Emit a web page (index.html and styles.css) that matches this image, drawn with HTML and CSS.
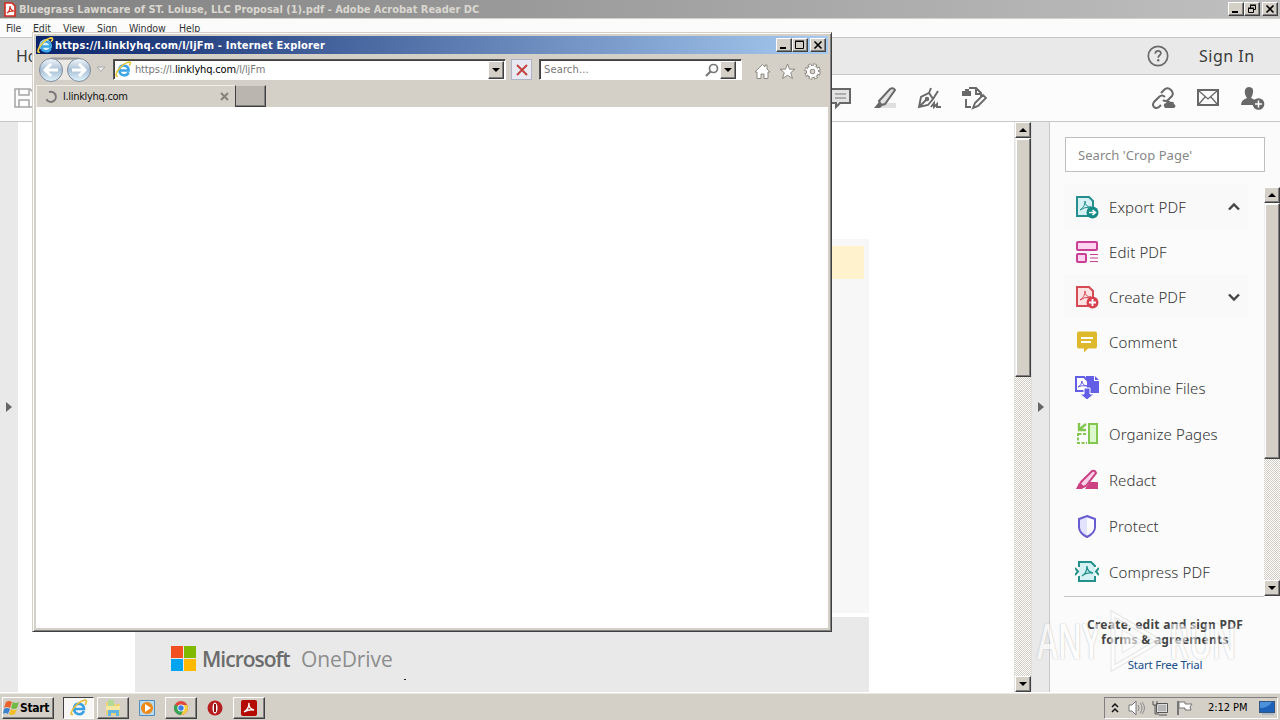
FILE: index.html
```html
<!DOCTYPE html>
<html lang="en">
<head>
<meta charset="UTF-8">
<title>Bluegrass Lawncare of ST. Loiuse, LLC Proposal (1).pdf - Adobe Acrobat Reader DC</title>
<link rel="stylesheet" href="styles.css">
</head>
<body>
<div class="desktop">

<!-- Acrobat Reader -->
<div class="titlebar">
	<svg class="pdf-ico" width="12" height="15" viewBox="0 0 12 15"><path d="M1 1h7l3 3v10H1z" fill="#fff" stroke="#d22b20" stroke-width="1.6"/><path d="M3 11c2-1 3-4 3-7c0 3 2 5 4 5c-3 0-5 0-7 2" fill="none" stroke="#d22b20" stroke-width="1.2"/></svg>
	<span class="title-text">Bluegrass Lawncare of ST. Loiuse, LLC Proposal (1).pdf - Adobe Acrobat Reader DC</span>
	<div class="win-btns">
		<i class="wbtn"><svg width="14" height="12"><path d="M3 9h6" stroke="#000" stroke-width="2"/></svg></i>
		<i class="wbtn"><svg width="14" height="12"><path d="M5.5 5V2.5h5v4H9M5 2h6M3.500 5.500h5v4h-5zM3 5h6" fill="none" stroke="#000"/></svg></i>
		<i class="wbtn close"><svg width="14" height="12"><path d="M3.500 2.500l7 7M10.500 2.500l-7 7" stroke="#000" stroke-width="1.600"/></svg></i>
	</div>
</div>
<div class="menubar">
	<span class="m1">File</span><span class="m2">Edit</span><span class="m3">View</span><span class="m4">Sign</span><span class="m5">Window</span><span class="m6">Help</span>
</div>
<div class="tabbar">
	<span class="home">Home</span>
	<svg class="help" width="22" height="22" viewBox="0 0 22 22"><circle cx="11" cy="11" r="9.700" fill="none" stroke="#6a6a6a" stroke-width="1.700"/><path d="M8.300 8.700c0-3.700 5.600-3.500 5.600-.4c0 2-2.700 2-2.700 4.500" fill="none" stroke="#6a6a6a" stroke-width="1.700"/><circle cx="11.200" cy="15.300" r="1.200" fill="#6a6a6a"/></svg>
	<span class="signin">Sign In</span>
</div>
<div class="toolbar">
	<svg class="save" width="20" height="20" viewBox="0 0 20 20" fill="none" stroke="#a4a4a4" stroke-width="1.500"><path d="M1 1h15l3 3v15H1zM5 1v6h10V1M5 19v-7h10v7"/></svg>
	<div class="tools-mid">
		<svg width="24" height="24" viewBox="0 0 24 24"><path d="M2 3h19v14H11l-4 4v-4H2z" fill="#e3e3e3" stroke="#686868" stroke-width="2"/><path d="M6 8h11M6 12h11" stroke="#777" stroke-width="1.200"/></svg>
		<svg width="24" height="24" viewBox="0 0 24 24"><path d="M9 17h14v5H6z" fill="#dfdfdf"/><path d="M6 15L17 3q3-2 5 1L12 18l-4 1z" fill="#e3e3e3" stroke="#686868" stroke-width="2"/><path d="M6 16l4 3-3 3H1z" fill="#686868"/></svg>
		<svg width="24" height="24" viewBox="0 0 24 24" fill="none" stroke="#686868" stroke-width="1.900"><path d="M2 21L4 11l8-4 4 6-5 6zM2 21l7-7M12 7l2-5M16 13l5-8"/><circle cx="10" cy="13" r="1.300"/><path d="M14 21l3-4v4l3-3v3h4"/></svg>
		<svg width="26" height="24" viewBox="0 0 26 24" fill="none" stroke="#686868" stroke-width="1.900"><path d="M8 2h7l5 5v4M15 2v6h5M5 13v8h5M12 22l2-5 8-8 3 3-8 8z"/><path d="M1 5h9v5H1zM4 3h4v2H4z" fill="#686868" stroke="none"/></svg>
	</div>
	<div class="tools-right">
		<svg width="25" height="24" viewBox="0 0 25 24" fill="none" stroke="#686868" stroke-width="2"><path d="M10 7l4-4q3-2 6 1t1 6l-4 4q-3 2-5 0M14 11q-3-3-6 0l-5 5q-2 3 0 5t5 0l2-2"/><path d="M14 22q-3-4 1-5q1-4 5-1q3-1 3 2q3 2 0 4z" fill="#686868" stroke="none"/></svg>
		<svg width="24" height="24" viewBox="0 0 24 24" fill="none" stroke="#686868"><rect x="2" y="4" width="20" height="15" stroke-width="2"/><path d="M3 5l9 8 9-8M3 18l6-7M21 18l-6-7" stroke-width="1.300"/></svg>
		<svg width="26" height="24" viewBox="0 0 26 24" fill="#686868"><path d="M9 1q5 0 4 6q-1 4-2 5l4 2-2 5H1q0-5 6-7q-3-4-2-8q1-3 4-3z"/><circle cx="18.500" cy="18" r="5.200" stroke="#686868" stroke-width="1.300"/><path d="M15 18h7M18.500 14.500v7" stroke="#fff" stroke-width="1.500"/></svg>
	</div>
</div>

<div class="main">
	<div class="strip left"><i class="tri"></i></div>
	<div class="doc">
		<div class="sheet">
			<div class="yellow"></div>
		</div>
		<div class="sheet-foot">
			<div class="ms-logo"><i></i><i></i><i></i><i></i></div>
			<span class="ms">Microsoft</span><span class="od">OneDrive</span>
			<b class="dot"></b>
		</div>
	</div>
	<div class="scroll doc-scroll">
		<i class="sbtn up"></i><i class="thumb"></i><i class="track"></i><i class="sbtn down"></i>
	</div>
	<div class="strip right"><i class="tri"></i></div>
	<div class="panel">
		<div class="search">Search 'Crop Page'</div>
		<div class="panel-body">
			<ul class="tool-list">
				<li class="shade"><svg width="24" height="24" viewBox="0 0 24 24"><path d="M2 2h12l4 4v15H2z" fill="#d5f1f3" stroke="#268e8e" stroke-width="2"/><path d="M5 15q5-3 5-9q0 6 6 6q-7 0-11 3" fill="none" stroke="#268e8e"/><circle cx="17.500" cy="17.500" r="6" fill="#158b88"/><path d="M14 17.500h6M17.500 15l3 2.500-3 2.500" stroke="#fff" stroke-width="1.600" fill="none"/></svg><span>Export PDF</span><svg class="chev" width="14" height="10"><path d="M2 7.500L7 2.500l5 5" fill="none" stroke="#444" stroke-width="2.400"/></svg></li>
				<li><svg width="24" height="24" viewBox="0 0 24 24" fill="#ffd3ef" stroke="#c93f95" stroke-width="2"><rect x="2" y="2" width="20" height="8" rx="1"/><rect x="2" y="14" width="9" height="8" rx="1"/><path d="M15 14.500h8M15 18h8M15 21.500h8" stroke-width="1.100"/></svg><span>Edit PDF</span></li>
				<li class="shade"><svg width="24" height="24" viewBox="0 0 24 24"><path d="M2 2h12l4 4v15H2z" fill="#fde3e3" stroke="#d64a55" stroke-width="2"/><path d="M5 15q5-3 5-9q0 6 6 6q-7 0-11 3" fill="none" stroke="#d64a55"/><circle cx="17.500" cy="17.500" r="6" fill="#d84250"/><path d="M14 17.500h7M17.500 14v7" stroke="#fff" stroke-width="1.800"/></svg><span>Create PDF</span><svg class="chev" width="14" height="10"><path d="M2 2.500l5 5 5-5" fill="none" stroke="#444" stroke-width="2.400"/></svg></li>
				<li><svg width="24" height="24" viewBox="0 0 24 24"><path d="M4 1.500h16q2 0 2 2v13q0 2-2 2h-7l-4 4v-4H4q-2 0-2-2v-13q0-2 2-2z" fill="#dfb92c"/><path d="M6 8h12M6 12h10" stroke="#fff" stroke-width="2"/></svg><span>Comment</span></li>
				<li class="big"><svg width="26" height="26" viewBox="0 0 26 26"><path d="M14 1h6v5h5v12H12V1z" fill="#635ee6"/><path d="M21 1l4 4h-4z" fill="#635ee6"/><path d="M2 2h8l4 4v10H2z" fill="#fff" stroke="#635ee6" stroke-width="2"/><path d="M4 12q4-2 4-6q0 4 5 5q-6-1-9 1" fill="none" stroke="#635ee6"/><path d="M10 13h6v6h4l-7 6-7-6h4z" fill="#635ee6" stroke="#fff"/></svg><span>Combine Files</span></li>
				<li class="big"><svg width="24" height="24" viewBox="0 0 24 24" fill="none" stroke="#83c750" stroke-width="2"><rect x="14" y="2" width="8" height="19" fill="#dcf8cc"/><path d="M3 11v10h9M11 12H2" stroke-dasharray="3 1.500"/><path d="M11 2L5 7M4 1v7h7" stroke-width="2.400"/></svg><span>Organize Pages</span></li>
				<li class="big"><svg width="24" height="24" viewBox="0 0 24 24"><path d="M15 14h7q1 0 1 1v6H10z" fill="#cc3f83"/><path d="M6 14L17 3q3-1 4 2L11 18l-3 1-3-3z" fill="#fcd1e7" stroke="#cc3f83" stroke-width="2"/><path d="M4 15l5 4-2 2H1z" fill="#cc3f83"/></svg><span>Redact</span></li>
				<li class="big"><svg width="24" height="24" viewBox="0 0 24 24"><path d="M12 2l8 3v8q0 6-8 10q-8-4-8-10V5z" fill="#e4e3ff" stroke="#675bd0" stroke-width="2"/><path d="M12 4l7 2v7q0 5-7 8z" fill="#fafaff"/></svg><span>Protect</span></li>
				<li class="big"><svg width="24" height="24" viewBox="0 0 24 24" fill="none" stroke="#23908c" stroke-width="2"><path d="M4 3h12l4 4v13H4z" fill="#d5f1f3" stroke="none"/><path d="M4 7V2h12l4 4v1M4 16v5h16v-5M0 8l3 3.500L0 15M24 8l-3 3.500 3 3.500"/><path d="M7 16q5-3 5-10q0 6 6 7q-7-1-11 3" stroke-width="1.300"/></svg><span>Compress PDF</span></li>
			</ul>
			<div class="scroll panel-scroll">
				<i class="sbtn up"></i><i class="thumb"></i><i class="track"></i><i class="sbtn down"></i>
			</div>
		</div>
		<div class="promo">
			<b class="p1">Create, edit and sign PDF</b>
			<b class="p2">forms &amp; agreements</b>
			<a class="trial">Start Free Trial</a>
		</div>
	</div>
</div>

<!-- taskbar -->
<div class="taskbar">
	<div class="start"><svg width="17" height="16" viewBox="0 0 17 16"><path d="M3 2q3-2 6 0L7 8Q4 6 1 8z" fill="#e9622a"/><path d="M10 2q3 2 6 0l-2 6q-3 2-6 0z" fill="#72b844"/><path d="M1 9q3-2 6 0l-2 5q-3-2-5 0z" fill="#3c83cf"/><path d="M8 9q3 2 6 0l-2 5q-3 2-6 0z" fill="#f4bd2c"/></svg><b>Start</b></div>
	<div class="task active"><svg width="18" height="18" viewBox="0 0 18 18"><path d="M14 12q-2 4-6 3t-4-6q1-5 6-4q4 1 4 5H5" fill="none" stroke="#39a0e3" stroke-width="2.600"/><path d="M3 15q-4 2 0-5Q9 2 15 1q3 0 0 5" fill="none" stroke="#e8bd35" stroke-width="1.500"/></svg></div>
	<div class="task folder"><svg width="18" height="18" viewBox="0 0 18 18"><path d="M2 3h6l1 2h7v11H2z" fill="#e9d47c"/><path d="M4 1h6v6H4z" fill="#b2d996"/><path d="M2 7h14v4H2z" fill="#f6e8a2"/><path d="M4 17v-6h11v6h-3v-3H7v3z" fill="#62b4df"/></svg></div>
	<div class="task-plain wmp"><svg width="16" height="16" viewBox="0 0 16 16"><path d="M.5.500h15v15H.5z" fill="#b9d9ef" stroke="#538dbd"/><circle cx="8" cy="8" r="6" fill="#ee8817"/><path d="M6 4l6 4-6 4z" fill="#fff"/></svg></div>
	<div class="task chrome"><svg width="16" height="16" viewBox="0 0 16 16"><circle cx="8" cy="8" r="7" fill="#e0493d"/><path d="M1.900 4.500A7 7 0 0 0 8 15l3-5.500-3-1.500z" fill="#36a455"/><path d="M8 15a7 7 0 0 0 6.300-10H8l3 4z" fill="#f6cd40"/><circle cx="8" cy="8" r="3.600" fill="#fff"/><circle cx="8" cy="8" r="2.700" fill="#3d7ce5"/></svg></div>
	<div class="task-plain opera"><svg width="16" height="16" viewBox="0 0 16 16"><circle cx="8" cy="8" r="7.500" fill="#b81e20"/><ellipse cx="8" cy="8" rx="2.500" ry="5.500" fill="#fff"/><path d="M8 4v8" stroke="#8c1114" stroke-width="2"/></svg></div>
	<div class="task acro"><svg width="16" height="16" viewBox="0 0 16 16"><rect width="16" height="16" rx="2" fill="#b30b00"/><path d="M3 12q5-3 5-9q-1 5 5 7q-5-1-10 2" fill="none" stroke="#fff" stroke-width="1.400"/></svg></div>
	<div class="tray">
		<svg width="8" height="12"><path d="M1 5l3-3 3 3M1 10l3-3 3 3" fill="none" stroke="#111" stroke-width="1.500"/></svg>
		<svg class="spk" width="18" height="16" viewBox="0 0 18 16" fill="none" stroke="#8a8a8a"><path d="M1 5h3l4-4v14l-4-4H1z" fill="#fff" stroke="#777"/><path d="M10 5q2 3 0 6M12 3q4 5 0 10M14 2q5 6 0 12"/></svg>
		<svg class="net" width="17" height="16" viewBox="0 0 17 16"><path d="M5 4h10v8H5z" fill="#b5b5b5" stroke="#fff"/><path d="M4.500 3.500h11v9h-11zM7 15h8M1 1v4h4V1M3 5v9h4" fill="none" stroke="#555"/></svg>
		<svg class="flag" width="17" height="16" viewBox="0 0 17 16"><path d="M2 1v14" stroke="#777" stroke-width="2"/><path d="M3 2h6v2h7l-2 3 1 3H9V8H3z" fill="#fff" stroke="#777"/></svg>
		<span class="clock">2:12 PM</span>
		<svg class="desk" width="16" height="14"><rect x=".5" y=".5" width="15" height="11" fill="#1e61b8" stroke="#34567f"/><path d="M1 7q8 0 12-6H1z" fill="#4b91dc"/><path d="M3 13h12" stroke="#89a5c4"/></svg>
	</div>
</div>

<!-- Internet Explorer window -->
<div class="ie">
	<div class="ie-title">
		<svg width="17" height="17" viewBox="0 0 18 18"><circle cx="9" cy="9" r="6.500" fill="#dff2fc"/><path d="M14.500 12q-2 4-6 3t-4-6q1-5 6-4q4 1 4 5H5" fill="none" stroke="#3aa4e8" stroke-width="2.600"/><path d="M3 16q-4 1 0-6Q9 2 15 1q3 0 0 4" fill="none" stroke="#f4d23e" stroke-width="1.800"/></svg>
		<b>https://l.linklyhq.com/l/ljFm - Internet Explorer</b>
		<div class="win-btns">
			<i class="wbtn"><svg width="14" height="12"><path d="M3 9h6" stroke="#000" stroke-width="2"/></svg></i>
			<i class="wbtn"><svg width="14" height="12"><path d="M2.500 2.500h8v7h-8zM2 2h9" fill="none" stroke="#000"/></svg></i>
			<i class="wbtn close"><svg width="14" height="12"><path d="M3.500 2.500l7 7M10.500 2.500l-7 7" stroke="#000" stroke-width="1.600"/></svg></i>
		</div>
	</div>
	<div class="ie-nav">
		<svg class="navs" width="55" height="26" viewBox="0 0 55 26"><defs><linearGradient id="ball" x1="0" y1="0" x2="0" y2="1"><stop offset="0" stop-color="#f3f8fc"/><stop offset=".5" stop-color="#a9c0d5"/><stop offset="1" stop-color="#e2f5fe"/></linearGradient></defs><path d="M13 1.500h28" stroke="#999" stroke-width="2"/><path d="M13 3h28v20H13z" fill="#ece9e5"/><circle cx="13" cy="13" r="11.500" fill="url(#ball)" stroke="#7f8b9b"/><circle cx="41" cy="13" r="11.500" fill="url(#ball)" stroke="#7f8b9b"/><path d="M20 13H8M13 7l-6 6 6 6M34 13h12M41 7l6 6-6 6" stroke="#fff" stroke-width="3" fill="none"/></svg>
		<svg class="drop" width="10" height="7"><path d="M1 1h8L5 5.500z" fill="#eee" stroke="#aaa"/></svg>
		<div class="addr"><svg width="17" height="17" viewBox="0 0 18 18"><path d="M14.500 12q-2 4-6 3t-4-6q1-5 6-4q4 1 4 5H5" fill="none" stroke="#3aa4e8" stroke-width="2.600"/><path d="M3 16q-4 1 0-6Q9 2 15 1q3 0 0 4" fill="none" stroke="#e9c53a" stroke-width="1.600"/></svg><span class="url">https://l.<em>linklyhq.com</em>/l/ljFm</span><i class="sbtn down"></i></div>
		<div class="stop"><svg width="12" height="12"><path d="M1 1l10 10M11 1L1 11" stroke="#c34343" stroke-width="2"/></svg></div>
		<div class="ie-search"><span>Search...</span><svg width="14" height="14" viewBox="0 0 14 14" fill="none" stroke="#777"><circle cx="8.500" cy="5.500" r="4" stroke-width="1.700"/><path d="M5.500 8.500L1 13" stroke-width="2.200"/></svg><i class="sbtn down"></i></div>
		<div class="ie-icons">
			<svg width="17" height="17" viewBox="0 0 17 17"><path d="M8.500 1.500L1 9h2v6.500h4V11h3v4.500h4V9h2L13 6V2h-2v2z" fill="#fff" stroke="#8f8a82"/></svg>
			<svg width="17" height="17" viewBox="0 0 17 17"><path d="M8.500 1l2 5.200H16l-4.300 3.500 1.800 5.800-5-3.300-5 3.300 1.800-5.800L1 6.200h5.500z" fill="#fff" stroke="#8f8a82"/></svg>
			<svg width="17" height="17" viewBox="0 0 17 17" fill="none"><circle cx="8.500" cy="8.500" r="6.500" stroke="#85807a" stroke-width="3.400" stroke-dasharray="3.300 1.800"/><circle cx="8.500" cy="8.500" r="4.300" stroke="#85807a" stroke-width="4.600"/><circle cx="8.500" cy="8.500" r="6.500" stroke="#fff" stroke-width="1.800" stroke-dasharray="2 3.100" stroke-dashoffset="-.6"/><circle cx="8.500" cy="8.500" r="4.200" stroke="#fff" stroke-width="3"/></svg>
		</div>
	</div>
	<div class="ie-tabs">
		<div class="tab"><svg width="14" height="14"><path d="M5 2.200a5 5 0 1 1-2.500 7" fill="none" stroke="#777" stroke-width="2"/></svg><span>l.linklyhq.com</span><svg class="x" width="9" height="9"><path d="M1 1l7 7M8 1L1 8" stroke="#85807a" stroke-width="2"/></svg></div>
		<i class="newtab"></i>
	</div>
	<div class="ie-page"></div>
</div>

<div class="wmark"><span>ANY</span><svg width="60" height="62" viewBox="0 0 60 62" fill="none"><path d="M8 4l46 27L8 58z" stroke="#d9d9d9" stroke-width="5"/><path d="M8 4l46 27L8 58z" stroke="#fff" stroke-width="3"/><path d="M17 20l20 11-20 12z" fill="#fff" stroke="#d9d9d9"/></svg><span>RUN</span></div>
</div>
</body>
</html>
```
FILE: styles.css
```css
*{box-sizing:border-box}
body{margin:0;background:#fff;font-family:"DejaVu Sans Condensed","DejaVu Sans",sans-serif;font-size:11px;color:#222}
i,em{font-style:normal}
svg{display:block;flex:none}
span,b,a{white-space:nowrap}
.desktop{position:relative;width:1280px;height:720px;overflow:hidden;display:flex;flex-direction:column}

/* acrobat */
.titlebar{height:19px;display:flex;align-items:center;background:linear-gradient(90deg,#808080,#c0c0c0);border-bottom:1px solid #d4d0c8;padding:0 2px 0 4px}
.title-text{font-weight:bold;color:#dad7d0;margin-left:3px;letter-spacing:-.02px}
.win-btns{display:flex;margin-left:auto}
.wbtn{width:16px;height:14px;background:#d4d0c8;border:1px solid;border-color:#fff #404040 #404040 #fff;box-shadow:inset -1px -1px #808080}
.close{margin-left:2px}
.menubar{height:19px;background:#fbfbfb;border-bottom:1px solid #c6c6c6;display:flex;padding:3px 0 0 6px;line-height:13px;color:#333}
.menubar span{font-size:10.5px;letter-spacing:-.1px}
.m1{width:27px}.m2{width:30px}.m3{width:34px}.m4{width:32px}.m5{width:50px}
.tabbar{height:37px;background:#e9e9e9;border-bottom:1px solid #c8c8c8;display:flex;align-items:center;padding:0 26px 0 16px;font-family:"Noto Sans",sans-serif;font-size:16px;color:#3b3b3b}
.help{margin-left:auto}
.signin{margin-left:30px;width:55px;letter-spacing:.5px}
.toolbar{height:47px;background:#fcfcfc;border-bottom:1px solid #c8c8c8;display:flex;align-items:center;padding:0 14px}
.tools-mid{display:flex;gap:20px;margin-left:795px}
.tools-right{display:flex;gap:20px;margin-left:auto}
.main{height:570px;display:flex}
.strip{width:18px;background:#e9e9e9;display:flex;align-items:center;justify-content:center}
.strip.right{border-right:1px solid #c8c8c8}
.tri{border-left:6px solid #666;border-top:5px solid transparent;border-bottom:5px solid transparent}
.doc{width:996px;background:#fff;padding:117px 0 0 117px}
.sheet{width:734px;height:374px;background:#f7f7f7;padding:7px 5px 0 0}
.yellow{height:33px;background:#fff2cc}
.sheet-foot{width:734px;height:75px;margin-top:4px;background:#e9e9e9;display:flex;padding:29px 0 0 36px;font-family:"Open Sans","Noto Sans",sans-serif;font-size:21px;line-height:26px}
.ms-logo{display:grid;grid-template-columns:12px 12px;grid-template-rows:12px 12px;gap:1px;width:25px;height:26px}
.ms-logo i:nth-child(1){background:#f25022}
.ms-logo i:nth-child(2){background:#7fba00}
.ms-logo i:nth-child(3){background:#00a4ef}
.ms-logo i:nth-child(4){background:#ffb900}
.ms{margin-left:6px;width:99px;color:#6c6c6c;font-weight:600;letter-spacing:-1px}
.od{width:92px;color:#8d8d8d;letter-spacing:-.1px}
.dot{width:2px;height:1px;background:#222;margin:33px 0 0 11px}

/* classic scrollbars */
.scroll{width:17px;display:flex;flex-direction:column}
.sbtn{width:16px;height:16px;flex:none;background:#d4d0c8;border:1px solid;border-color:#fff #404040 #404040 #fff;box-shadow:inset -1px -1px #808080;display:flex;align-items:center;justify-content:center}
.sbtn:before{content:"";border-left:4px solid transparent;border-right:4px solid transparent}
.up:before{border-bottom:4px solid #000}
.down:before{border-top:4px solid #000}
.thumb{background:#d4d0c8;border:1px solid;border-color:#fff #404040 #404040 #eee;box-shadow:inset -1px -1px #808080,inset 1px 1px #fff}
.track{flex:1;background:repeating-conic-gradient(#d0ccc3 0 25%,#fff 0 50%) 0 0/2px 2px}
.scroll .sbtn{width:100%}
.doc-scroll .thumb{height:239px}
.doc-scroll{width:18px;border-left:1px solid #e4e2dd;border-right:1px solid #ddd}
.panel-scroll{width:16px;height:409px;margin-top:2px}
.panel-scroll .thumb{height:256px}

.panel{width:230px;background:#fbfbfb}
.search{width:200px;height:35px;margin:15px 0 0 15px;border:1px solid #bfbfbf;background:#fff;color:#888;font:13px/34px "Noto Sans",sans-serif;padding-left:12px;letter-spacing:.05px}
.panel-body{display:flex;justify-content:space-between;margin-top:13px;padding-left:14px}
.tool-list{list-style:none;margin:-1px 0 0;padding:0;width:200px;height:413px;border-bottom:1px solid #c4c4c4;font-family:"Noto Sans",sans-serif;font-size:15px;font-weight:300;color:#333;letter-spacing:.12px}
.tool-list li{height:45px;width:184px;display:flex;align-items:center;padding-left:11px}
.tool-list li.big{height:46px}
.tool-list li:nth-child(4){height:46px}
.tool-list li.shade{background:#f9f9f9}
.tool-list li>span{margin-left:10px}
.tool-list svg[width="26"]{margin:0 -1px}
.chev{margin-left:auto;margin-right:7px}
.promo{display:flex;flex-direction:column;align-items:center;padding-top:20px;line-height:15px;font-size:12px}
.p1,.p2{font-family:"Noto Sans",sans-serif;font-size:12px;color:#444;letter-spacing:.27px}
.trial{font-family:"Noto Sans",sans-serif;font-size:11.5px;color:#1a4f8c;margin-top:10px;letter-spacing:-.23px}

/* taskbar */
.taskbar{height:28px;background:#d4d0c8;border-top:1px solid #fff;box-shadow:inset 0 1px #ece9e2;display:flex;align-items:center;padding:2px 2px 0 2px}
.start,.task{height:22px;border:1px solid;border-color:#fff #404040 #404040 #fff;box-shadow:inset -1px -1px #808080;display:flex;align-items:center;justify-content:center}
.start{width:52px;font-size:12px;color:#000;justify-content:flex-start}
.start b{letter-spacing:-.3px}
.task{width:32px}
.active{width:31px;margin-left:9px;background:#f8f7f5;border-color:#404040 #fff #fff #404040;box-shadow:none}
.folder{margin-left:3px}
.task-plain{width:16px}
.wmp,.chrome,.opera,.acro{margin-left:10px}
.tray{margin-left:auto;width:174px;height:22px;border:1px solid;border-color:#808080 #fff #fff #808080;display:flex;align-items:center;padding-left:6px}
.spk{margin-left:9px}
.net{margin-left:6px}
.flag{margin-left:7px}
.clock{margin-left:15px;width:51px;color:#000;letter-spacing:-.05px}

/* ie window */
.ie{position:absolute;left:32px;top:32px;width:800px;height:600px;background:#d4d0c8;border:1px solid;border-color:#d4d0c8 #404040 #404040 #d4d0c8;box-shadow:inset 1px 1px #fff,inset -1px -1px #808080;padding:3px;display:flex;flex-direction:column}
.ie-title{height:18px;background:linear-gradient(90deg,#0a246a,#a6caf0);display:flex;align-items:center;padding:0 2px 0 1px;color:#fff}
.ie-title b{margin-left:1px;letter-spacing:.2px}
.ie-nav{height:31px;display:flex;align-items:center;padding-left:2px}
.drop{margin-left:3px}
.addr,.ie-search{height:21px;background:#fff;border:1px solid;border-color:#555 #fff #fff #555;box-shadow:inset 1px 1px #404040;display:flex;align-items:center;padding:1px}
.addr{margin-left:7px;width:393px}
.url{color:#777;margin-left:3px;letter-spacing:-.15px}
.url em{color:#000}
.addr .sbtn{margin-left:auto;height:18px}
.stop{width:21px;height:21px;margin-left:5px;border:1px solid #aeb4c5;background:#e9eaf1;display:flex;align-items:center;justify-content:center}
.ie-search{margin-left:7px;width:203px}
.ie-search span{color:#777;margin-left:3px;letter-spacing:.15px}
.ie-search svg{margin-left:auto}
.ie-search .sbtn{margin:0 4px 0 1px;height:18px}
.ie-icons{display:flex;gap:8px;margin-left:12px;padding-top:3px}
.ie-tabs{height:22px;display:flex}
.tab{width:199px;height:22px;border:1px solid #f2efe9;border-bottom:0;border-right:0;display:flex;align-items:center;padding:0 6px 0 7px;color:#111}
.tab span{margin-left:5px;letter-spacing:-.3px}
.tab .x{margin-left:auto}
.newtab{width:31px;height:22px;background:#bab5ae;border:1px solid;border-color:#d4d0c8 #404040 #404040 #404040;box-shadow:inset -1px -1px #808080}
.ie-page{flex:1;background:#fff}

.wmark{position:absolute;left:1037px;top:610px;display:flex;align-items:center;opacity:.6;font:600 48px/60px "Open Sans",sans-serif;color:#fff;text-shadow:0 0 2px #aaa,0 0 1px #bbb}
.wmark svg{margin:0 4px}
.wmark span{width:64px;transform:scaleX(.65);transform-origin:0 0}
```
